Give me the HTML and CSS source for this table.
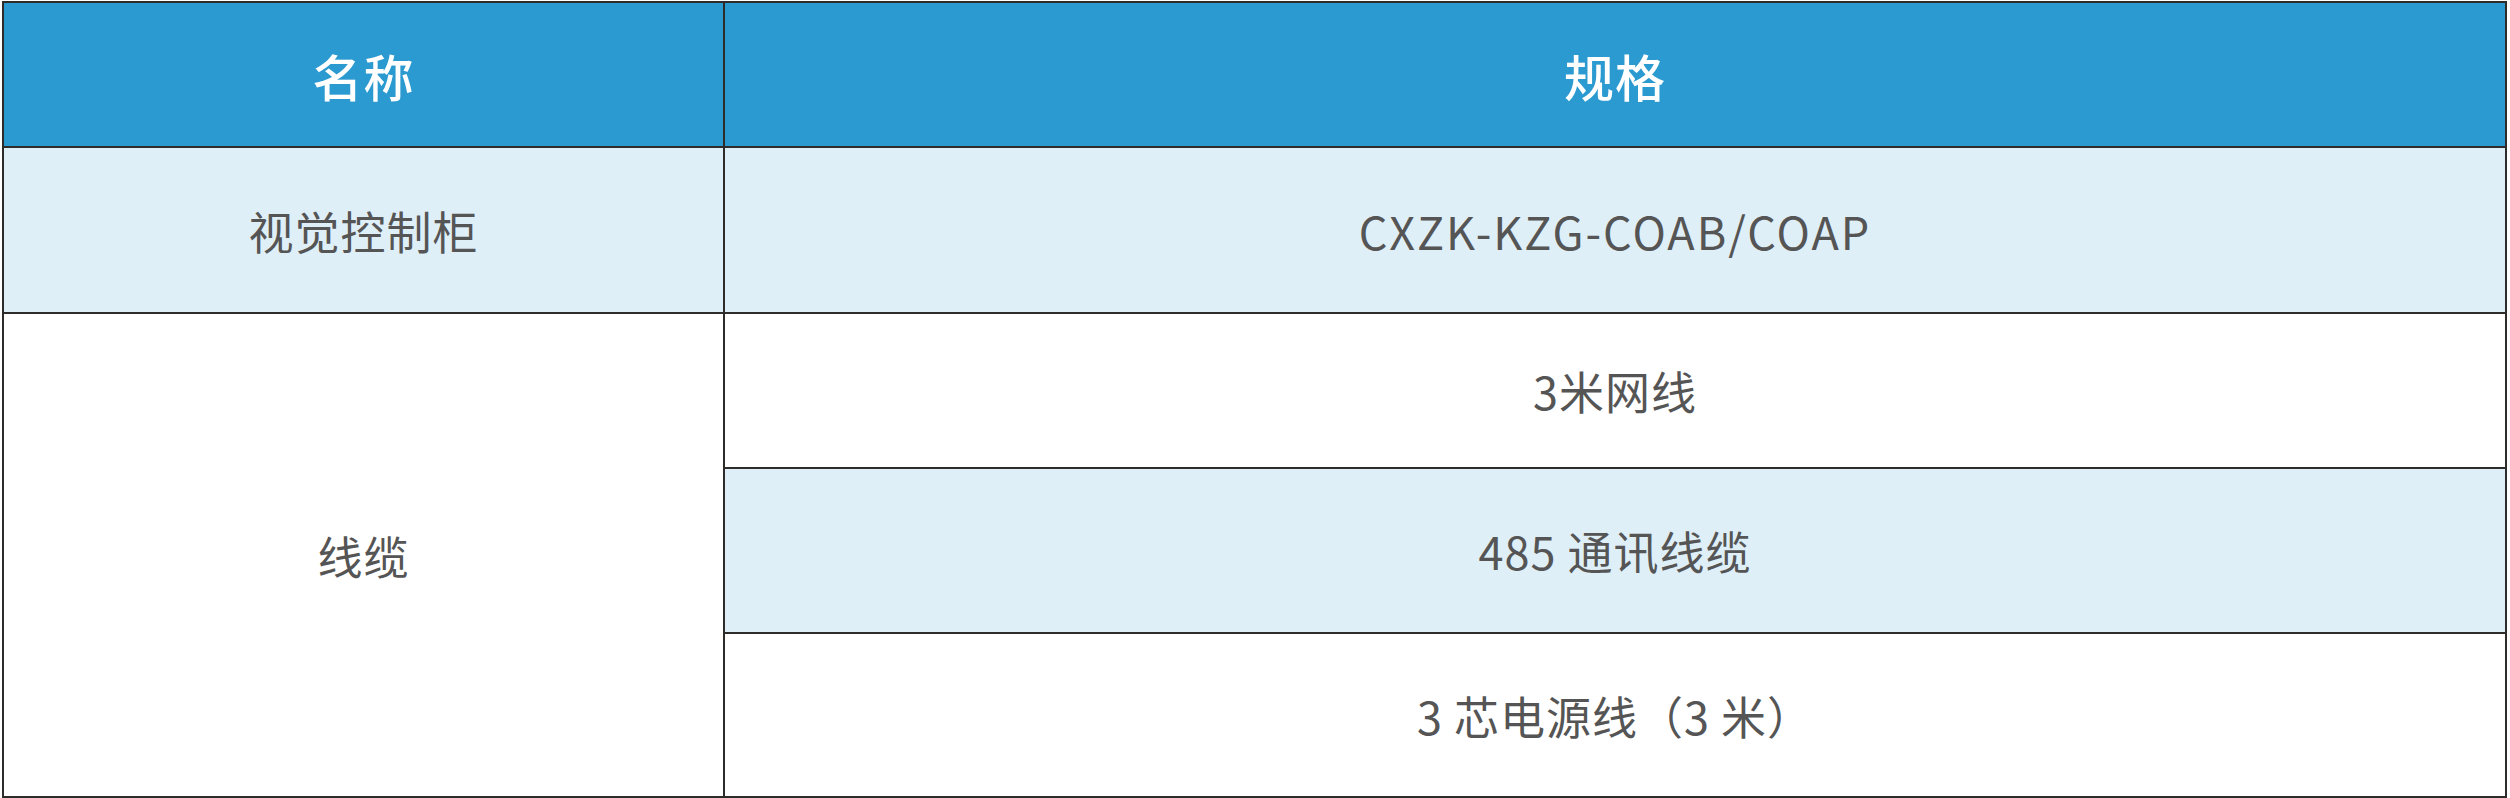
FILE: index.html
```html
<!DOCTYPE html>
<html lang="zh-CN">
<head>
<meta charset="utf-8">
<title>规格表</title>
<link rel="stylesheet" href="styles.css">
</head>
<body>
<table class="spec">
  <colgroup>
    <col class="col-name">
    <col class="col-spec">
  </colgroup>
  <thead>
    <tr class="row-head">
      <th>名称</th>
      <th>规格</th>
    </tr>
  </thead>
  <tbody>
    <tr class="row-1 tint">
      <td>视觉控制柜</td>
      <td class="latin">CXZK-KZG-COAB/COAP</td>
    </tr>
    <tr class="row-2">
      <td rowspan="3" class="plain">线缆</td>
      <td>3米网线</td>
    </tr>
    <tr class="row-3">
      <td class="tint-cell">485 通讯线缆</td>
    </tr>
    <tr class="row-4">
      <td>3 芯电源线（3 米）</td>
    </tr>
  </tbody>
</table>
</body>
</html>
```

FILE: styles.css
```css
html, body {
  margin: 0;
  padding: 0;
  background: #ffffff;
}

body {
  padding: 1px 0 0 2px;
  font-family: "Noto Sans CJK SC", "Noto Sans", sans-serif;
}

.spec {
  border-collapse: collapse;
  width: 2505px;
  table-layout: fixed;
  border: 2px solid #2e2b2b;
}

.col-name { width: 721px; }

.spec th,
.spec td {
  border: 2px solid #2e2b2b;
  text-align: center;
  vertical-align: middle;
  padding: 0;
}

.spec th {
  background: #2b9ad0;
  color: #ffffff;
  font-size: 50px;
  font-weight: 500;
  letter-spacing: 1px;
}

.spec td {
  color: #555555;
  font-size: 45px;
  font-weight: 400;
  letter-spacing: 1px;
}

.spec td.latin {
  letter-spacing: 2px;
}

.row-head { height: 145px; }
.row-1 { height: 166px; }
.row-2 { height: 155px; }
.row-3 { height: 165px; }
.row-4 { height: 164px; }

.tint td,
.spec td.tint-cell {
  background: #dfeff8;
}

.spec td.plain {
  background: #ffffff;
}
```
